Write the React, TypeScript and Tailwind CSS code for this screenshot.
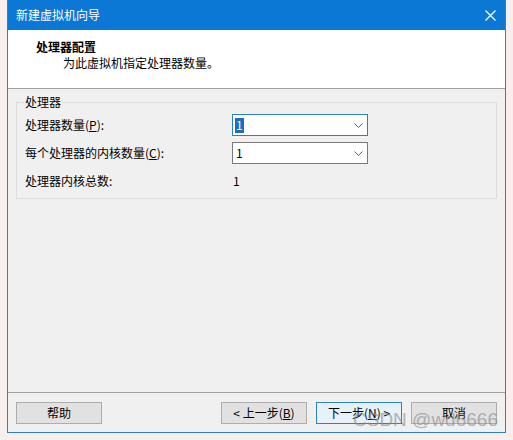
import React from "react";

const font = { fontFamily: '"Noto Sans CJK SC", "Liberation Sans", sans-serif' };

function Chevron() {
  return (
    <svg width="9" height="5" viewBox="0 0 9 5" className="shrink-0">
      <path d="M0.5 0.5 L4.5 4.5 L8.5 0.5" fill="none" stroke="#606060" strokeWidth="1" />
    </svg>
  );
}

function Combo({ focused }: { focused?: boolean }) {
  return (
    <div
      className={
        "flex h-[22px] w-[136px] items-center justify-between bg-white pl-[2px] pr-[4px] border " +
        (focused ? "border-[#2f7fc4]" : "border-[#7a7a7a]")
      }
    >
      {focused ? (
        <span className="flex h-[15px] items-center bg-[#1c6fc0] px-[1px] text-[12px] leading-none text-white">1</span>
      ) : (
        <span className="px-[1px] text-[12px] leading-none text-black">1</span>
      )}
      <Chevron />
    </div>
  );
}

function Btn({ label, primary }: { label: React.ReactNode; primary?: boolean }) {
  return (
    <div
      className={
        "flex h-[22px] w-[86px] items-center justify-center border text-[12px] leading-none text-black " +
        (primary ? "border-[#2f7fc4] bg-[#e5f1fb]" : "border-[#adadad] bg-[#e1e1e1]")
      }
    >
      {label}
    </div>
  );
}

export default function App() {
  return (
    <div className="relative h-[440px] w-[513px] overflow-hidden bg-[#f8eeee]" style={font}>
      <div className="ml-[7px] flex h-[433px] w-[499px] flex-col border border-t-0 border-[#2a7fd0] bg-[#f0f0f0]">
        {/* title bar */}
        <div className="flex h-[30px] shrink-0 items-center justify-between bg-[#0b78d6] pl-[8px] pr-[9px]">
          <span className="text-[12px] leading-none text-white">新建虚拟机向导</span>
          <svg width="11" height="11" viewBox="0 0 11 11">
            <path d="M0.5 0.5 L10.5 10.5 M10.5 0.5 L0.5 10.5" stroke="white" strokeWidth="1.3" />
          </svg>
        </div>

        {/* header */}
        <div className="h-[59px] shrink-0 border-b border-[#a0a0a0] bg-white pl-[28px] pt-[9px]">
          <div className="h-[16px] text-[12px] font-bold leading-[16px] text-black">处理器配置</div>
          <div className="h-[16px] pl-[27px] text-[12px] leading-[16px] text-black">为此虚拟机指定处理器数量。</div>
        </div>

        {/* body */}
        <div className="h-[304px] shrink-0 border-b border-[#a0a0a0] px-[8px] pt-[13px]">
          <div className="relative h-[97px] border border-[#dcdcdc] pl-[8px] pt-[11px]">
            <span className="absolute -top-[9px] left-[7px] bg-[#f0f0f0] px-[1px] text-[12px] leading-[16px] text-black">
              处理器
            </span>
            <div className="grid grid-cols-[207px_136px] grid-rows-[22px_22px_22px] gap-y-[6px] text-[12px] text-black">
              <div className="flex items-center leading-none">
                处理器数量(<span className="underline">P</span>):
              </div>
              <Combo focused />
              <div className="flex items-center leading-none">
                每个处理器的内核数量(<span className="underline">C</span>):
              </div>
              <Combo />
              <div className="flex items-center leading-none">处理器内核总数:</div>
              <div className="flex items-center pl-[1px] leading-none">1</div>
            </div>
          </div>
        </div>

        {/* footer */}
        <div className="flex flex-1 items-start px-[8px] pt-[9px]">
          <Btn label="帮助" />
          <div className="ml-auto flex gap-[9px]">
            <Btn label={<span>&lt; 上一步(<span className="underline">B</span>)</span>} />
            <Btn primary label={<span>下一步(<span className="underline">N</span>) &gt;</span>} />
            <Btn label="取消" />
          </div>
        </div>
      </div>

      {/* watermark */}
      <span
        className="pointer-events-none absolute left-[353px] top-[410px] text-[19px] leading-none text-[#8a8a8a] opacity-60"
        style={{ fontFamily: '"Liberation Sans", sans-serif' }}
      >
        CSDN @wd6666
      </span>
    </div>
  );
}
